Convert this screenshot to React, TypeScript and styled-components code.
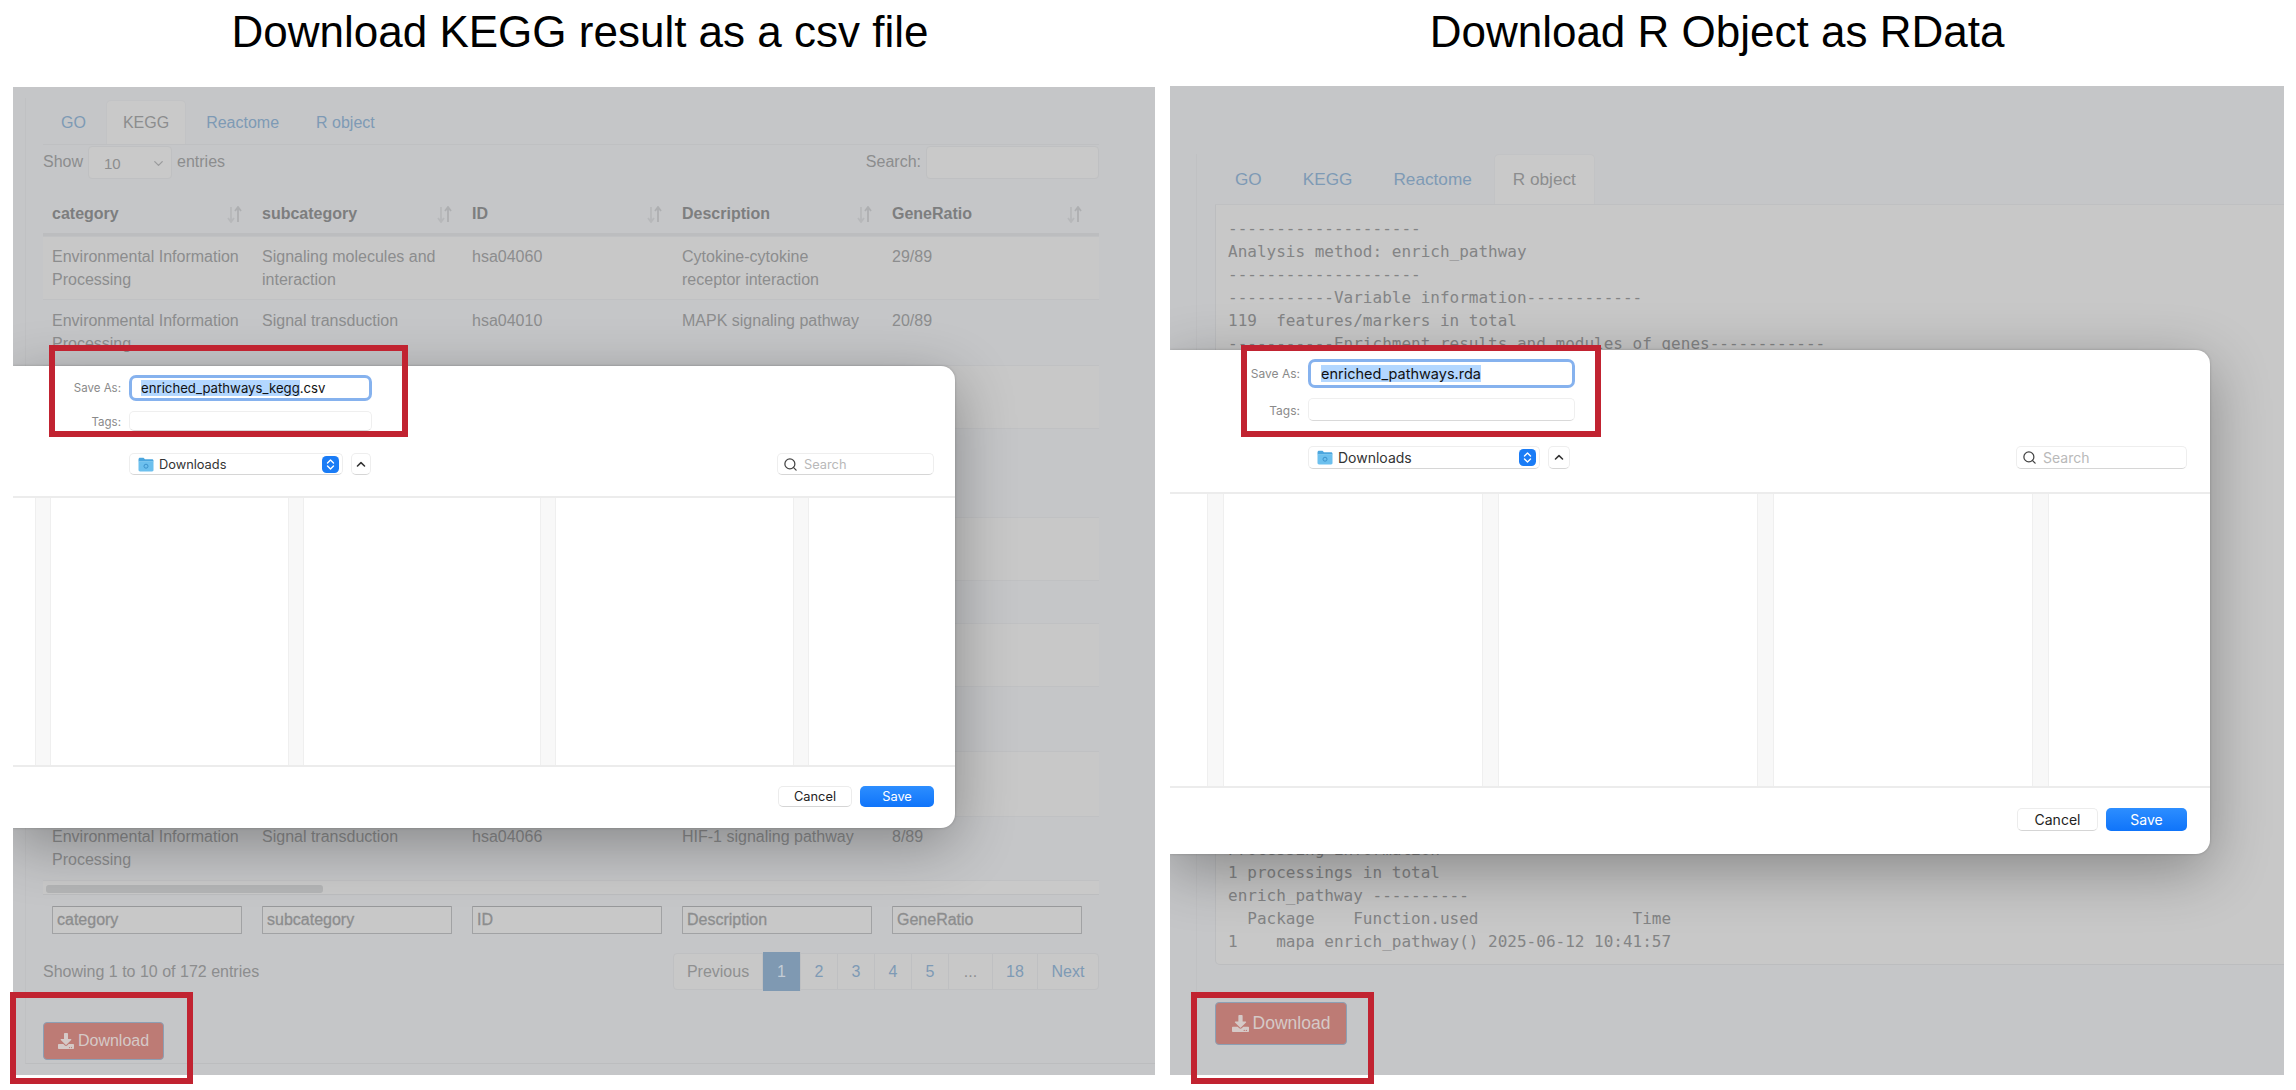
import React from 'react'
import styled, { createGlobalStyle } from 'styled-components'
import { ChevronDown, Search } from 'lucide-react'
import { FaDownload } from 'react-icons/fa'

const GlobalStyle = createGlobalStyle`
	html, body {
		margin: 0;
		background: #fff;
		overflow: hidden;
	}
	* {
		box-sizing: border-box;
	}
`

const Page = styled.div`
	display: flex;
	gap: 15px;
	width: 2296px;
	height: 1090px;
	padding: 0 12px 0 13px;
	font-family: 'Liberation Sans', Arial, sans-serif;
`

const Figure = styled.section<{ $width: number }>`
	position: relative;
	width: ${p => p.$width}px;
	flex: none;
`

const Title = styled.h1<{ $height: number; $shift: number }>`
	display: flex;
	align-items: flex-start;
	justify-content: center;
	height: ${p => p.$height}px;
	margin: 0;
	padding: 7px ${p => p.$shift}px 0 0;
	font-size: 44px;
	line-height: 50px;
	font-weight: 400;
	color: #000;
`

const Panel = styled.div<{ $height: number }>`
	position: relative;
	height: ${p => p.$height}px;
	overflow: hidden;
	background: #c5c6c8;
	color: #8c8d8e;
`

const RedBox = styled.div<{ $x: number; $y: number; $w: number; $h: number }>`
	position: absolute;
	left: ${p => p.$x}px;
	top: ${p => p.$y}px;
	width: ${p => p.$w}px;
	height: ${p => p.$h}px;
	border: 6px solid #c12331;
	pointer-events: none;
`

const Shell = styled.div`
	height: 966px;
	margin: 11px 0 0 12px;
	padding: 2px 56px 0 17px;
	border-left: 1px solid #c0c1c3;
	border-bottom: 1px solid #bcbdbf;
`

const TabBar = styled.div<{ $size: number; $height: number; $pad: number; $gap: number }>`
	display: flex;
	gap: ${p => p.$gap}px;
	height: ${p => p.$height}px;
	padding-left: 1px;
	border-bottom: 1px solid #bfc0c2;
	font-size: ${p => p.$size}px;
	--tab-pad: ${p => p.$pad}px;
`

const Tab = styled.div<{ $active?: boolean }>`
	display: flex;
	align-items: center;
	padding: 0 var(--tab-pad);
	border: 1px solid ${p => (p.$active ? '#c2c3c5' : 'transparent')};
	border-bottom: 0;
	border-radius: 5px 5px 0 0;
	background: ${p => (p.$active ? '#c9c9c9' : 'transparent')};
	color: ${p => (p.$active ? '#8c8d8e' : '#7e9ab5')};
`

const Controls = styled.div`
	display: flex;
	align-items: flex-start;
	justify-content: space-between;
	height: 35px;
	margin-top: 1px;
	font-size: 16px;
`

const Inline = styled.div`
	display: flex;
	align-items: flex-start;
	gap: 5px;
	line-height: 31px;
`

const PageSize = styled.div`
	display: flex;
	align-items: center;
	justify-content: space-between;
	width: 84px;
	height: 33px;
	padding: 2px 5px 0 15px;
	border: 1px solid #bfc0c2;
	border-radius: 4px;
	background: #c9c9c9;
	font-size: 15px;
`

const SearchInput = styled.input`
	width: 173px;
	height: 33px;
	border: 1px solid #bfc0c2;
	border-radius: 4px;
	background: #c9c9c9;
`

const Columns = styled.div`
	display: grid;
	grid-template-columns: repeat(5, 210px);
	padding-left: 9px;
`

const HeaderRow = styled(Columns)`
	align-items: center;
	height: 55px;
	padding-top: 14px;
	border-bottom: 3px solid #bcbdbf;
	font-size: 16px;
	font-weight: 700;
	color: #7d7e7f;
`

const HeaderCell = styled.div`
	display: flex;
	align-items: center;
	justify-content: space-between;
	padding-right: 20px;
`

const Row = styled(Columns)<{ $height: number; $striped: boolean; $pad: number }>`
	height: ${p => p.$height}px;
	padding-top: ${p => p.$pad}px;
	overflow: hidden;
	border-top: 1px solid #c0c1c3;
	background: ${p => (p.$striped ? '#c8c8c8' : 'transparent')};
	font-size: 16px;
	line-height: 23px;
`

const Cell = styled.div`
	padding-right: 22px;
`

const ScrollTrack = styled.div`
	height: 15px;
	padding: 4px 3px;
	border-top: 1px solid #c0c1c3;
	border-bottom: 1px solid #bcbdbf;
	background: #c9c9c9;
`

const ScrollThumb = styled.div`
	width: 277px;
	height: 8px;
	border-radius: 3px;
	background: #b3b4b5;
`

const FilterRow = styled(Columns)`
	margin-top: 11px;
`

const FilterInput = styled.input`
	width: 190px;
	height: 28px;
	padding: 0 4px;
	border: 1px solid #a1a2a4;
	border-top-color: #98999b;
	border-radius: 1px;
	background: #c8c8c8;
	font: 400 16px 'Liberation Sans', Arial, sans-serif;
	-webkit-text-stroke: 0.3px #8c8d8e;
	&::placeholder {
		color: #8c8d8e;
		opacity: 1;
	}
`

const TableFooter = styled.div`
	display: flex;
	align-items: center;
	justify-content: space-between;
	height: 37px;
	margin-top: 19px;
	font-size: 16px;
`

const Pagination = styled.div`
	display: flex;
	height: 37px;
	border: 1px solid #bfc0c2;
	border-radius: 4px;
	background: #c8c8c8;
`

const PageLink = styled.div<{ $width: number; $active?: boolean; $muted?: boolean }>`
	display: flex;
	align-items: center;
	justify-content: center;
	width: ${p => p.$width}px;
	margin: ${p => (p.$active ? '-2px 0' : 0)};
	border-right: 1px solid #bfc0c2;
	background: ${p => (p.$active ? '#7f99b2' : 'transparent')};
	color: ${p => (p.$active ? '#c3ccd5' : p.$muted ? '#8f9091' : '#7e9ab5')};
	&:last-child {
		border-right: 0;
	}
`

const DownloadButton = styled.button<{ $width: number; $height: number; $size: number; $top: number }>`
	display: flex;
	align-items: center;
	justify-content: center;
	gap: 4px;
	width: ${p => p.$width}px;
	height: ${p => p.$height}px;
	margin-top: ${p => p.$top}px;
	padding: 0;
	border: 1px solid #8c9fb4;
	border-radius: 4px;
	background: #bd7b75;
	color: #d5c9c7;
	font-family: 'Liberation Sans', Arial, sans-serif;
	font-size: ${p => p.$size}px;
`

const ObjectShell = styled.div`
	height: 921px;
	margin: 68px 0 0 26px;
	padding-left: 18px;
	border-left: 1px solid #c0c1c3;
`

const Console = styled.pre`
	height: 760px;
	margin: 0 -8px 0 0;
	padding: 12px 12px 0;
	border: 1px solid #bcbdbf;
	border-top: 0;
	border-radius: 0 0 5px 5px;
	background: #c8c8c8;
	color: #838485;
	font-family: 'DejaVu Sans Mono', 'Liberation Mono', monospace;
	font-size: 16px;
	line-height: 23px;
`

const Dialog = styled.div`
	position: absolute;
	left: 0;
	display: flex;
	flex-direction: column;
	background: #fff;
	border-radius: 0 14px 14px 0;
	box-shadow: 0 16px 60px rgba(0, 0, 0, 0.32), 0 0 3px rgba(0, 0, 0, 0.2);
	color: #222;
	font-family: Inter, 'Liberation Sans', sans-serif;
`

const KeggDialog = styled(Dialog)`
	top: 279px;
	width: 942px;
	height: 462px;
	--top: 9px;
	--field-left: 116px;
	--field-w: 243px;
	--name-h: 26px;
	--tags-gap: 10px;
	--tags-h: 20px;
	--label: 11.5px;
	--name: 13.2px;
	--name-pad: 9px;
	--locate-gap: 22px;
	--locate-h: 22px;
	--popup-w: 214px;
	--up-w: 20px;
	--search-w: 157px;
	--small: 12.8px;
	--side: 21px;
	--browser-gap: 21px;
	--browser-h: 271px;
	--first: 22px;
	--column: 252.5px;
	--gutter: 15px;
	--button-w: 74px;
	--button-h: 21px;
`

const ObjectDialog = styled(Dialog)`
	top: 264px;
	width: 1040px;
	height: 504px;
	--top: 9px;
	--field-left: 138px;
	--field-w: 267px;
	--name-h: 29px;
	--tags-gap: 10px;
	--tags-h: 23px;
	--label: 12px;
	--name: 14.5px;
	--name-pad: 10px;
	--locate-gap: 25px;
	--locate-h: 23px;
	--popup-w: 232px;
	--up-w: 22px;
	--search-w: 171px;
	--small: 14px;
	--side: 23px;
	--browser-gap: 23px;
	--browser-h: 296px;
	--first: 37px;
	--column: 275px;
	--gutter: 15.5px;
	--button-w: 81px;
	--button-h: 23px;
`

const FormRow = styled.div`
	display: flex;
	align-items: center;
	gap: 8px;
	padding-left: calc(var(--field-left) - 70px);
`

const NameRow = styled(FormRow)`
	height: var(--name-h);
	margin-top: var(--top);
`

const TagsRow = styled(FormRow)`
	height: var(--tags-h);
	margin-top: var(--tags-gap);
`

const FieldLabel = styled.label`
	width: 62px;
	text-align: right;
	font-size: var(--label);
	color: #8a8a8a;
`

const TagsLabel = styled(FieldLabel)`
	padding-top: 2px;
`

const NameField = styled.div`
	display: flex;
	align-items: center;
	width: var(--field-w);
	height: 100%;
	padding-left: var(--name-pad);
	border: 3px solid #86b2ee;
	border-radius: 7px;
	font-size: var(--name);
	color: #111;
	white-space: pre;
`

const Selected = styled.span`
	background: #b3d7ff;
`

const TagsField = styled.div`
	width: var(--field-w);
	height: 100%;
	border: 1px solid #efefef;
	border-bottom-color: #d9d9d9;
	border-radius: 5px;
`

const LocateRow = styled.div`
	display: flex;
	align-items: center;
	gap: 8px;
	height: var(--locate-h);
	margin-top: var(--locate-gap);
	padding: 0 var(--side) 0 var(--field-left);
`

const Popup = styled.div`
	display: flex;
	align-items: center;
	gap: 5px;
	width: var(--popup-w);
	height: 100%;
	padding: 0 3px 0 8px;
	border: 1px solid #eee;
	border-bottom-color: #d6d6d6;
	border-radius: 5px;
	font-size: var(--small);
	color: #333;
`

const PopupLabel = styled.span`
	flex: 1;
`

const UpButton = styled.div`
	display: flex;
	align-items: center;
	justify-content: center;
	width: var(--up-w);
	height: 100%;
	border: 1px solid #eee;
	border-bottom-color: #d6d6d6;
	border-radius: 5px;
`

const SearchField = styled.div`
	display: flex;
	align-items: center;
	gap: 6px;
	width: var(--search-w);
	height: 100%;
	margin-left: auto;
	padding-left: 5px;
	border: 1px solid #eee;
	border-bottom-color: #d6d6d6;
	border-radius: 5px;
	font-size: var(--small);
	color: #b9b9b9;
`

const Browser = styled.div`
	display: flex;
	flex: none;
	height: var(--browser-h);
	margin-top: var(--browser-gap);
	overflow: hidden;
	border-top: 2px solid #ececec;
	border-bottom: 2px solid #ececec;
`

const BrowserStart = styled.div`
	flex: none;
	width: var(--first);
`

const BrowserColumn = styled.div`
	flex: none;
	width: var(--column);
	background: linear-gradient(to right, #f8f8f8 var(--gutter), #fff var(--gutter));
	border-left: 1px solid #efefef;
	position: relative;
	&::after {
		content: '';
		position: absolute;
		top: 0;
		bottom: 0;
		left: calc(var(--gutter) - 1px);
		border-left: 1px solid #efefef;
	}
`

const DialogFooter = styled.div`
	display: flex;
	align-items: center;
	justify-content: flex-end;
	gap: 8px;
	flex: 1;
	padding: 0 var(--side) 0 0;
	margin-top: -3px;
`

const CancelButton = styled.button`
	width: var(--button-w);
	height: var(--button-h);
	padding: 0;
	border: 1px solid #ececec;
	border-bottom-color: #d5d5d5;
	border-radius: 5px;
	background: #fff;
	color: #222;
	font: 400 var(--small) Inter, 'Liberation Sans', sans-serif;
`

const SaveButton = styled(CancelButton)`
	border: 0;
	background: linear-gradient(#2d8eff, #0f74fa);
	color: #fff;
`

const Folder = () => (
	<svg width="16" height="15" viewBox="0 0 16 15">
		<path d="M0.5 2.5C0.5 1.4 1.2 0.8 2 0.8H5.5L7 2.3H14C15 2.3 15.5 3 15.5 3.8V4.5H0.5Z" fill="#4ba6de" />
		<path d="M0.5 4.2H15.5V13C15.5 13.8 15 14.4 14 14.4H2C1 14.4 0.5 13.8 0.5 13Z" fill="#6cc0ee" />
		<circle cx="8" cy="9.2" r="2" fill="none" stroke="#3d93cc" strokeWidth="1" />
	</svg>
)

const Stepper = () => (
	<svg width="17" height="17" viewBox="0 0 17 17">
		<rect width="17" height="17" rx="4.5" fill="#1a7cf6" />
		<path d="M5.5 7L8.5 4L11.5 7M5.5 10L8.5 13L11.5 10" fill="none" stroke="#fff" strokeWidth="1.4" strokeLinecap="round" strokeLinejoin="round" />
	</svg>
)

const UpChevron = () => (
	<svg width="10" height="7" viewBox="0 0 10 7">
		<path d="M1.5 5L5 1.7L8.5 5" fill="none" stroke="#333" strokeWidth="1.6" strokeLinecap="round" strokeLinejoin="round" />
	</svg>
)

const SortIcon = () => (
	<svg width="15" height="17" viewBox="0 0 15 17">
		<path d="M4 1V15M1 12L4 16L7 12" fill="none" stroke="#b7b8ba" strokeWidth="1.8" />
		<path d="M11 16V2M8 5L11 1L14 5" fill="none" stroke="#aeafb1" strokeWidth="1.8" />
	</svg>
)

const headers = ['category', 'subcategory', 'ID', 'Description', 'GeneRatio']

const rows: { height: number; pad: number; cells: string[] }[] = [
	{ height: 63, pad: 8, cells: ['Environmental Information Processing', 'Signaling molecules and interaction', 'hsa04060', 'Cytokine-cytokine receptor interaction', '29/89'] },
	{ height: 66, pad: 9, cells: ['Environmental Information Processing', 'Signal transduction', 'hsa04010', 'MAPK signaling pathway', '20/89'] },
	{ height: 63, pad: 9, cells: [] },
	{ height: 89, pad: 9, cells: [] },
	{ height: 63, pad: 9, cells: [] },
	{ height: 43, pad: 9, cells: [] },
	{ height: 63, pad: 9, cells: [] },
	{ height: 65, pad: 9, cells: [] },
	{ height: 65, pad: 9, cells: [] },
	{ height: 64, pad: 8, cells: ['Environmental Information Processing', 'Signal transduction', 'hsa04066', 'HIF-1 signaling pathway', '8/89'] },
]

const pages = [
	{ label: 'Previous', width: 89, muted: true },
	{ label: '1', width: 38, active: true },
	{ label: '2', width: 37 },
	{ label: '3', width: 37 },
	{ label: '4', width: 37 },
	{ label: '5', width: 37 },
	{ label: '...', width: 44, muted: true },
	{ label: '18', width: 45 },
	{ label: 'Next', width: 60 },
]

const consoleText = [
	'--------------------',
	'Analysis method: enrich_pathway',
	'--------------------',
	'-----------Variable information------------',
	'119  features/markers in total',
	'-----------Enrichment results and modules of genes------------',
	...Array(21).fill(''),
	'Processing information',
	'1 processings in total',
	'enrich_pathway ----------',
	'  Package    Function.used                Time',
	'1    mapa enrich_pathway() 2025-06-12 10:41:57',
].join('\n')

const SaveSheet = ({ as: Sheet, selected, extension }: { as: typeof KeggDialog; selected: string; extension: string }) => (
	<Sheet>
		<NameRow>
			<FieldLabel>Save As:</FieldLabel>
			<NameField>
				<Selected>{selected}</Selected>
				{extension}
			</NameField>
		</NameRow>
		<TagsRow>
			<TagsLabel>Tags:</TagsLabel>
			<TagsField />
		</TagsRow>
		<LocateRow>
			<Popup>
				<Folder />
				<PopupLabel>Downloads</PopupLabel>
				<Stepper />
			</Popup>
			<UpButton>
				<UpChevron />
			</UpButton>
			<SearchField>
				<Search size={15} color="#444" />
				Search
			</SearchField>
		</LocateRow>
		<Browser>
			<BrowserStart />
			<BrowserColumn />
			<BrowserColumn />
			<BrowserColumn />
			<BrowserColumn />
		</Browser>
		<DialogFooter>
			<CancelButton>Cancel</CancelButton>
			<SaveButton>Save</SaveButton>
		</DialogFooter>
	</Sheet>
)

const App = () => (
	<>
		<GlobalStyle />
		<Page>
			<Figure $width={1142}>
				<Title $height={87} $shift={8}>Download KEGG result as a csv file</Title>
				<Panel $height={988}>
					<Shell>
						<TabBar $size={16} $height={45} $pad={16} $gap={3}>
							<Tab>GO</Tab>
							<Tab $active>KEGG</Tab>
							<Tab>Reactome</Tab>
							<Tab>R object</Tab>
						</TabBar>
						<Controls>
							<Inline>
								Show
								<PageSize>
									10
									<ChevronDown size={15} color="#9a9b9c" />
								</PageSize>
								entries
							</Inline>
							<Inline>
								Search:
								<SearchInput />
							</Inline>
						</Controls>
						<HeaderRow>
							{headers.map(header => (
								<HeaderCell key={header}>
									{header}
									<SortIcon />
								</HeaderCell>
							))}
						</HeaderRow>
						{rows.map((row, index) => (
							<Row key={index} $height={row.height} $pad={row.pad} $striped={index % 2 === 0}>
								{row.cells.map((cell, cellIndex) => (
									<Cell key={cellIndex}>{cell}</Cell>
								))}
							</Row>
						))}
						<ScrollTrack>
							<ScrollThumb />
						</ScrollTrack>
						<FilterRow>
							{headers.map(header => (
								<FilterInput key={header} placeholder={header} />
							))}
						</FilterRow>
						<TableFooter>
							Showing 1 to 10 of 172 entries
							<Pagination>
								{pages.map(page => (
									<PageLink key={page.label} $width={page.width} $active={page.active} $muted={page.muted}>
										{page.label}
									</PageLink>
								))}
							</Pagination>
						</TableFooter>
						<DownloadButton $width={121} $height={38} $size={16} $top={32}>
							<FaDownload size={16} />
							Download
						</DownloadButton>
					</Shell>
					<SaveSheet as={KeggDialog} selected="enriched_pathways_kegg" extension=".csv" />
				</Panel>
				<RedBox $x={36} $y={345} $w={359} $h={92} />
				<RedBox $x={-3} $y={992} $w={183} $h={92} />
			</Figure>
			<Figure $width={1114}>
				<Title $height={86} $shift={20}>Download R Object as RData</Title>
				<Panel $height={989}>
					<ObjectShell>
						<TabBar $size={17.2} $height={51} $pad={18} $gap={3}>
							<Tab>GO</Tab>
							<Tab>KEGG</Tab>
							<Tab>Reactome</Tab>
							<Tab $active>R object</Tab>
						</TabBar>
						<Console>{consoleText}</Console>
						<DownloadButton $width={132} $height={43} $size={17.5} $top={37}>
							<FaDownload size={17} />
							Download
						</DownloadButton>
					</ObjectShell>
					<SaveSheet as={ObjectDialog} selected="enriched_pathways.rda" extension="" />
				</Panel>
				<RedBox $x={71} $y={345} $w={360} $h={92} />
				<RedBox $x={21} $y={992} $w={183} $h={92} />
			</Figure>
		</Page>
	</>
)

export default App
